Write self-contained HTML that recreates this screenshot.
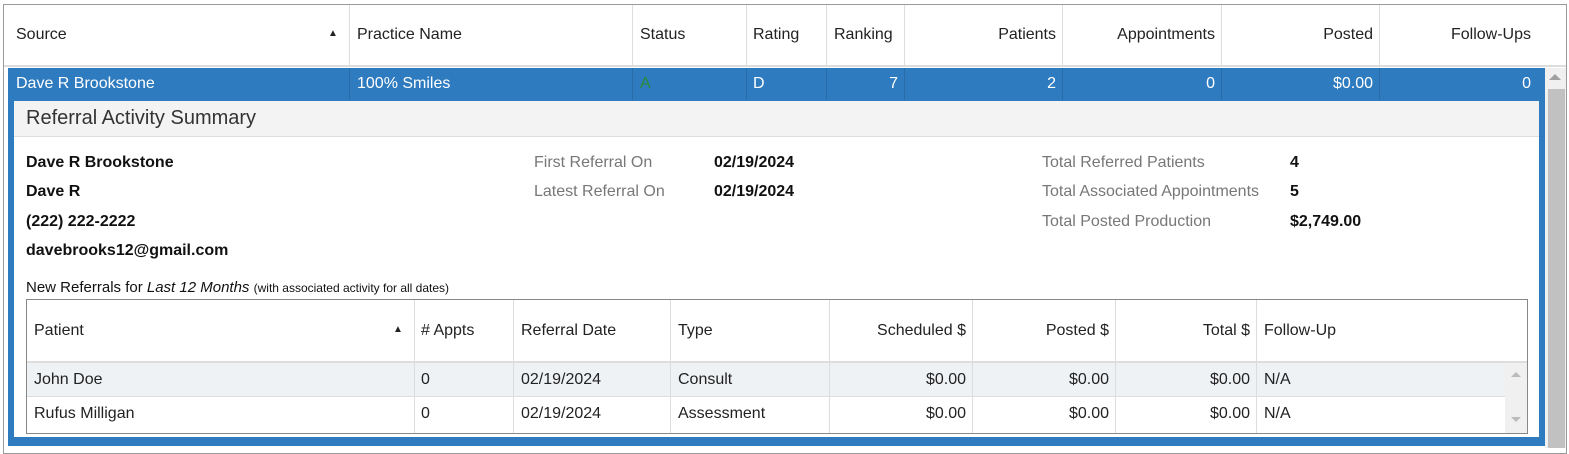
<!DOCTYPE html>
<html><head><meta charset="utf-8"><style>
*{box-sizing:border-box;margin:0;padding:0}
body{width:1569px;height:448px;background:#fff;font-family:"Liberation Sans",Arial,sans-serif;font-size:16px;color:#222;position:relative;overflow:hidden}
.a{position:absolute;white-space:nowrap}
.vl{position:absolute;width:1px;background:#ddd}
.r{text-align:right}
.g{color:#777}
.b{font-weight:600;color:#111}
.w{color:#fff}
</style></head><body>
<!-- outer border -->
<div class="a" style="left:3px;top:4px;width:1564px;height:450px;border:1px solid #9a9a9a"></div>
<!-- header -->
<div class="a" style="left:4px;top:5px;width:1562px;height:62px;background:#fff;border-bottom:2px solid #ddd"></div>
<div class="vl" style="left:349px;top:5px;height:62px"></div>
<div class="vl" style="left:632px;top:5px;height:62px"></div>
<div class="vl" style="left:746px;top:5px;height:62px"></div>
<div class="vl" style="left:826px;top:5px;height:62px"></div>
<div class="vl" style="left:904px;top:5px;height:62px"></div>
<div class="vl" style="left:1062px;top:5px;height:62px"></div>
<div class="vl" style="left:1221px;top:5px;height:62px"></div>
<div class="vl" style="left:1379px;top:5px;height:62px"></div>
<div class="a" style="left:16px;top:26px">Source</div>
<div class="a" style="left:328px;top:28px;font-size:10px">▲</div>
<div class="a" style="left:357px;top:26px">Practice Name</div>
<div class="a" style="left:640px;top:26px">Status</div>
<div class="a" style="left:753px;top:26px">Rating</div>
<div class="a" style="left:834px;top:26px">Ranking</div>
<div class="a r" style="left:904px;width:152px;top:26px">Patients</div>
<div class="a r" style="left:1062px;width:153px;top:26px">Appointments</div>
<div class="a r" style="left:1221px;width:152px;top:26px">Posted</div>
<div class="a r" style="left:1379px;width:152px;top:26px">Follow-Ups</div>
<!-- blue frame -->
<div class="a" style="left:8px;top:68px;width:1537px;height:378px;background:#2f7bbf"></div>
<div class="vl" style="left:349px;top:68px;height:32px;background:#2a6ca8"></div>
<div class="vl" style="left:632px;top:68px;height:32px;background:#2a6ca8"></div>
<div class="vl" style="left:746px;top:68px;height:32px;background:#2a6ca8"></div>
<div class="vl" style="left:826px;top:68px;height:32px;background:#2a6ca8"></div>
<div class="vl" style="left:904px;top:68px;height:32px;background:#2a6ca8"></div>
<div class="vl" style="left:1062px;top:68px;height:32px;background:#2a6ca8"></div>
<div class="vl" style="left:1221px;top:68px;height:32px;background:#2a6ca8"></div>
<div class="vl" style="left:1379px;top:68px;height:32px;background:#2a6ca8"></div>
<div class="a w" style="left:16px;top:75px">Dave R Brookstone</div>
<div class="a w" style="left:357px;top:75px">100% Smiles</div>
<div class="a" style="left:640px;top:75px;color:#2a8a3a">A</div>
<div class="a w" style="left:753px;top:75px">D</div>
<div class="a w r" style="left:826px;width:72px;top:75px">7</div>
<div class="a w r" style="left:904px;width:152px;top:75px">2</div>
<div class="a w r" style="left:1062px;width:153px;top:75px">0</div>
<div class="a w r" style="left:1221px;width:152px;top:75px">$0.00</div>
<div class="a w r" style="left:1379px;width:152px;top:75px">0</div>
<!-- outer scrollbar -->
<div class="a" style="left:1545px;top:68px;width:21px;height:380px;background:#f0f0f0"></div>
<div class="a" style="left:1549px;top:74px;width:0;height:0;border-left:6px solid transparent;border-right:6px solid transparent;border-bottom:6px solid #a0a0a0"></div>
<div class="a" style="left:1548px;top:89px;width:17px;height:359px;background:#c1c1c1"></div>
<!-- detail panel -->
<div class="a" style="left:14px;top:101px;width:1525px;height:336px;background:#fff"></div>
<div class="a" style="left:14px;top:101px;width:1525px;height:36px;background:#f3f3f3;border-bottom:1px solid #ddd"></div>
<div class="a" style="left:26px;top:107px;font-size:20px;color:#333">Referral Activity Summary</div>
<div class="a b" style="left:26px;top:154px">Dave R Brookstone</div>
<div class="a b" style="left:26px;top:183px">Dave R</div>
<div class="a b" style="left:26px;top:213px">(222) 222-2222</div>
<div class="a b" style="left:26px;top:242px">davebrooks12@gmail.com</div>
<div class="a g" style="left:534px;top:154px">First Referral On</div>
<div class="a g" style="left:534px;top:183px">Latest Referral On</div>
<div class="a b" style="left:714px;top:154px">02/19/2024</div>
<div class="a b" style="left:714px;top:183px">02/19/2024</div>
<div class="a g" style="left:1042px;top:154px">Total Referred Patients</div>
<div class="a g" style="left:1042px;top:183px">Total Associated Appointments</div>
<div class="a g" style="left:1042px;top:213px">Total Posted Production</div>
<div class="a b" style="left:1290px;top:154px">4</div>
<div class="a b" style="left:1290px;top:183px">5</div>
<div class="a b" style="left:1290px;top:213px">$2,749.00</div>
<div class="a" style="left:26px;top:279px;font-size:15px;color:#111">New Referrals for <i>Last 12 Months</i> <span style="font-size:12px">(with associated activity for all dates)</span></div>
<!-- inner table -->
<div class="a" style="left:26px;top:299px;width:1502px;height:135px;border:1px solid #888"></div>
<div class="a" style="left:27px;top:361px;width:1500px;height:2px;background:#ddd"></div>
<div class="a" style="left:27px;top:363px;width:1478px;height:34px;background:#eff2f5;border-bottom:1px solid #ddd"></div>
<div class="a" style="left:1505px;top:363px;width:22px;height:70px;background:#f0f0f0"></div>
<div class="a" style="left:1511px;top:372px;width:0;height:0;border-left:5px solid transparent;border-right:5px solid transparent;border-bottom:5px solid #bbb"></div>
<div class="a" style="left:1511px;top:417px;width:0;height:0;border-left:5px solid transparent;border-right:5px solid transparent;border-top:5px solid #bbb"></div>
<div class="vl" style="left:414px;top:300px;height:133px"></div>
<div class="vl" style="left:513px;top:300px;height:133px"></div>
<div class="vl" style="left:670px;top:300px;height:133px"></div>
<div class="vl" style="left:829px;top:300px;height:133px"></div>
<div class="vl" style="left:972px;top:300px;height:133px"></div>
<div class="vl" style="left:1115px;top:300px;height:133px"></div>
<div class="vl" style="left:1256px;top:300px;height:133px"></div>
<div class="a" style="left:34px;top:322px">Patient</div>
<div class="a" style="left:393px;top:324px;font-size:10px">▲</div>
<div class="a" style="left:421px;top:322px"># Appts</div>
<div class="a" style="left:521px;top:322px">Referral Date</div>
<div class="a" style="left:678px;top:322px">Type</div>
<div class="a r" style="left:829px;width:137px;top:322px">Scheduled $</div>
<div class="a r" style="left:972px;width:137px;top:322px">Posted $</div>
<div class="a r" style="left:1115px;width:135px;top:322px">Total $</div>
<div class="a" style="left:1264px;top:322px">Follow-Up</div>
<div class="a" style="left:34px;top:371px">John Doe</div>
<div class="a" style="left:421px;top:371px">0</div>
<div class="a" style="left:521px;top:371px">02/19/2024</div>
<div class="a" style="left:678px;top:371px">Consult</div>
<div class="a r" style="left:829px;width:137px;top:371px">$0.00</div>
<div class="a r" style="left:972px;width:137px;top:371px">$0.00</div>
<div class="a r" style="left:1115px;width:135px;top:371px">$0.00</div>
<div class="a" style="left:1264px;top:371px">N/A</div>
<div class="a" style="left:34px;top:405px">Rufus Milligan</div>
<div class="a" style="left:421px;top:405px">0</div>
<div class="a" style="left:521px;top:405px">02/19/2024</div>
<div class="a" style="left:678px;top:405px">Assessment</div>
<div class="a r" style="left:829px;width:137px;top:405px">$0.00</div>
<div class="a r" style="left:972px;width:137px;top:405px">$0.00</div>
<div class="a r" style="left:1115px;width:135px;top:405px">$0.00</div>
<div class="a" style="left:1264px;top:405px">N/A</div>
</body></html>
